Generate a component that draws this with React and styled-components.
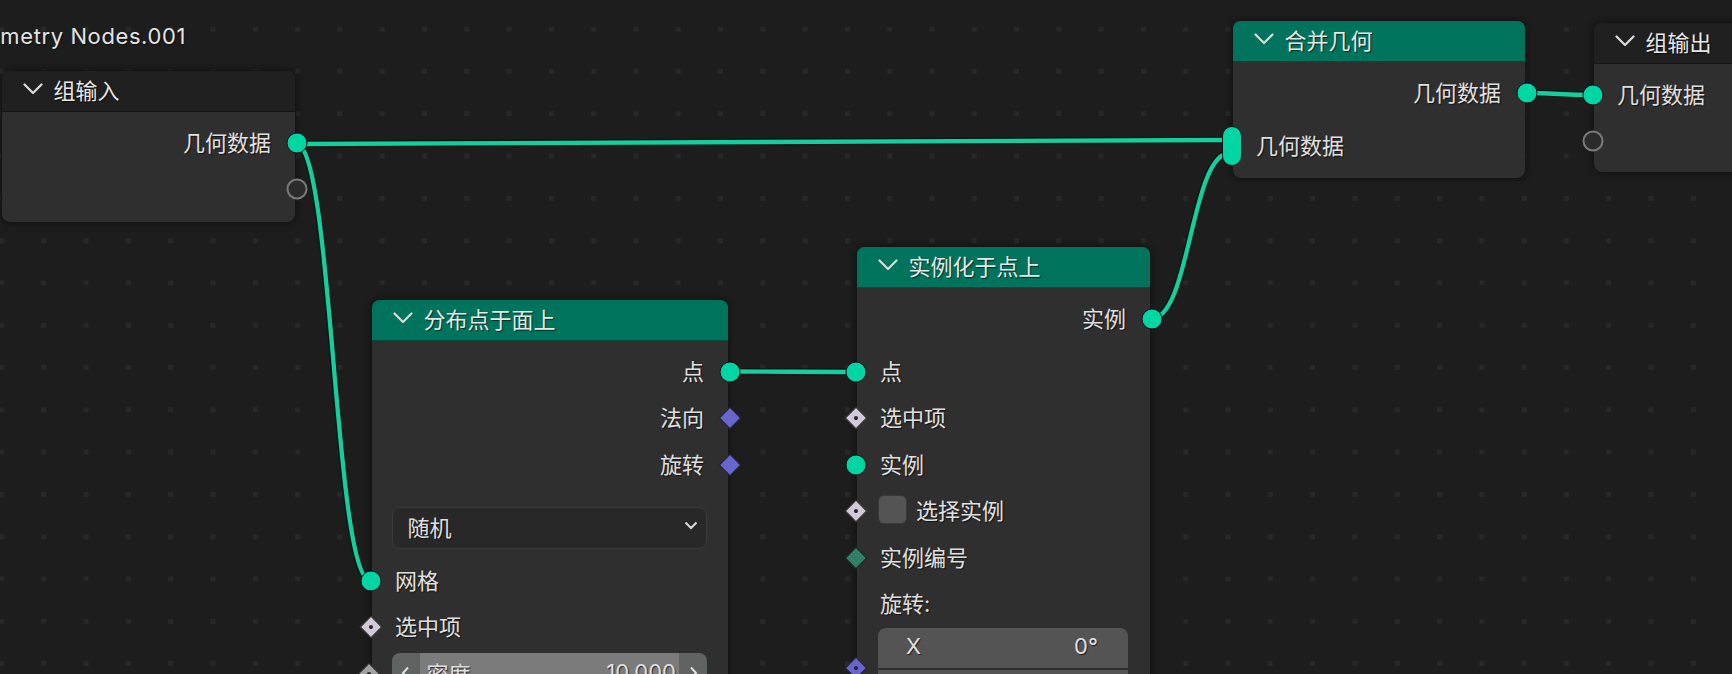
import React from 'react';
import styled, { createGlobalStyle, css } from 'styled-components';

const GlobalStyle = createGlobalStyle`
  html, body { margin: 0; padding: 0; background: #1d1d1d; overflow: hidden; }
  body { font-family: Inter, "Noto Sans CJK SC", "Noto Sans", sans-serif; }
  * { box-sizing: border-box; }
`;

const Canvas = styled.div`
  position: relative;
  width: 1732px;
  height: 674px;
  overflow: hidden;
  background-color: #1d1d1d;
  background-image: conic-gradient(from 270deg at 5px 5px, #282828 25%, transparent 0);
  background-size: 42.3px 42.3px;
  background-position: -1px 26.7px;
`;

const TreeTitle = styled.div`
  position: absolute;
  top: 21px;
  right: calc(100% - 186px);
  font-size: 22px;
  line-height: 30px;
  letter-spacing: 0.6px;
  white-space: nowrap;
  color: #e4e4e4;
  text-shadow: 1px 1px 1px rgba(0, 0, 0, 0.6);
`;

const Links = styled.svg`
  position: absolute;
  inset: 0;
  width: 1732px;
  height: 674px;
`;

const NodeBox = styled.div`
  position: absolute;
  left: ${(p) => p.$x}px;
  top: ${(p) => p.$y}px;
  width: ${(p) => p.$w}px;
  background: #2f2f2f;
  border: 1.5px solid #151515;
  border-radius: 9px;
  box-shadow: 0 0 7px rgba(0, 0, 0, 0.45);
  color: #e0e0e0;
  font-size: 22px;
  padding-bottom: ${(p) => p.$pb || 7}px;
`;

const Header = styled.div`
  height: 40.5px;
  display: flex;
  align-items: center;
  gap: 11px;
  padding-left: 20.5px;
  padding-bottom: 3px;
  background: ${(p) => (p.$teal ? '#00735c' : '#202020')};
  border-radius: 7.5px 7.5px 0 0;
  border-bottom: 1px solid rgba(0, 0, 0, 0.35);
  color: #e8e8e8;
  text-shadow: 1px 1px 1px rgba(0, 0, 0, 0.6);
  white-space: nowrap;
`;

const Chevron = styled.svg`
  width: 20px;
  height: 12px;
  flex: none;
`;

const Body = styled.div`
  display: flex;
  flex-direction: column;
  padding-top: 8px;
`;

const Row = styled.div`
  position: relative;
  height: 46.5px;
  display: flex;
  align-items: center;
  justify-content: ${(p) => (p.$out ? 'flex-end' : 'flex-start')};
  padding: ${(p) => (p.$out ? '0 24px 4px 0' : '0 0 4px 23px')};
`;

const Label = styled.span`
  white-space: nowrap;
  text-shadow: 1px 1px 1px rgba(0, 0, 0, 0.65);
`;

const Spacer = styled.div`
  height: 6.5px;
`;

const socketPlace = css`
  position: absolute;
  top: 50%;
  ${(p) => (p.$side === 'right' ? 'right: -1.5px;' : 'left: -1.5px;')}
`;

const Circle = styled.span`
  ${socketPlace}
  width: 21px;
  height: 21px;
  border-radius: 50%;
  background: #00d6a3;
  border: 1.5px solid #151515;
  transform: translate(${(p) => (p.$side === 'right' ? '50%' : '-50%')}, -50%);
  z-index: 2;
`;

const Hollow = styled(Circle)`
  background: #2b2b2b;
  border: 2px solid #7a7a7a;
`;

const Pill = styled.span`
  ${socketPlace}
  width: 20px;
  height: 40px;
  border-radius: 10px;
  background: #00d6a3;
  border: 1.5px solid #151515;
  transform: translate(-50%, -50%);
  z-index: 2;
`;

const diamondColors = {
  vector: '#6666cc',
  bool: '#d2c9d9',
  float: '#a1a1a1',
  int: '#2f7a63',
};

const Diamond = styled.span`
  ${socketPlace}
  top: ${(p) => p.$top || '50%'};
  width: 16px;
  height: 16px;
  background: ${(p) => diamondColors[p.$kind]};
  ${(p) =>
    p.$kind === 'int' &&
    css`
      background-image: radial-gradient(#4d9e86 35%, transparent 40%);
      background-size: 3px 3px;
    `}
  border: 1px solid #161616;
  transform: translate(${(p) => (p.$side === 'right' ? '50%' : '-50%')}, -50%) rotate(45deg);
  z-index: 2;
  display: flex;
  align-items: center;
  justify-content: center;
  &::after {
    content: '';
    display: ${(p) => (p.$dot ? 'block' : 'none')};
    width: 4px;
    height: 4px;
    border-radius: 50%;
    background: #262626;
  }
`;

const Select = styled.div`
  margin: 18.5px 21px 8.75px 19.5px;
  height: 42px;
  display: flex;
  align-items: center;
  justify-content: space-between;
  padding: 0 8px 4px 15px;
  background: #282828;
  border: 1.5px solid #3b3b3b;
  border-radius: 8px;
`;

const SmallChevron = styled.svg`
  width: ${(p) => p.$w || 14}px;
  height: ${(p) => p.$h || 9}px;
`;

const Slider = styled.div`
  position: relative;
  margin: 2.75px 21px 0 19.5px;
  height: 42px;
  display: flex;
  border-radius: 8px;
`;

const SliderCap = styled.div`
  width: 28px;
  flex: none;
  display: flex;
  align-items: center;
  justify-content: center;
  padding-bottom: 3px;
  background: #5f6361;
  border-radius: ${(p) => (p.$right ? '0 8px 8px 0' : '8px 0 0 8px')};
`;

const SliderMid = styled.div`
  flex: 1;
  display: flex;
  align-items: center;
  justify-content: space-between;
  padding: 0 3px 4px 7px;
  background: #7b7b7b;
`;

const SocketAnchor = styled.div`
  position: absolute;
  top: 0;
  bottom: 0;
  left: -21px;
  width: 0;
`;

const CheckBox = styled.span`
  width: 29px;
  height: 29px;
  margin-left: -2px;
  margin-right: 9px;
  border-radius: 6px;
  background: #545454;
  border: 1px solid #3a3a3a;
  flex: none;
`;

const VectorBlock = styled.div`
  position: relative;
  margin: 0 22px 0 21px;
  display: flex;
  flex-direction: column;
  gap: 2px;
`;

const VectorField = styled.div`
  height: 40px;
  display: flex;
  align-items: center;
  justify-content: space-between;
  padding: 0 30px 4px 28px;
  background: #545454;
  border-radius: ${(p) => (p.$first ? '8px 8px 0 0' : p.$last ? '0 0 8px 8px' : '0')};
`;

const HeaderChevron = () => (
  <Chevron viewBox="0 0 20 12">
    <polyline points="1.5,1.5 10,10 18.5,1.5" fill="none" stroke="#dcdcdc" strokeWidth="2.2" strokeLinecap="round" strokeLinejoin="round" />
  </Chevron>
);

const Node = ({ x, y, w, pb, title, teal, children }) => (
  <NodeBox $x={x} $y={y} $w={w} $pb={pb}>
    <Header $teal={teal}>
      <HeaderChevron />
      <span>{title}</span>
    </Header>
    <Body>{children}</Body>
  </NodeBox>
);

const bez = (x1, y1, x2, y2) => {
  const h = 0.5 * Math.abs(x2 - x1);
  return `M${x1} ${y1} C${x1 + h} ${y1} ${x2 - h} ${y2} ${x2} ${y2}`;
};

const linkData = [
  [296, 144, 1230, 140],
  [296, 144, 371, 581],
  [729, 371.5, 856, 372],
  [1151, 319, 1230, 153],
  [1526, 93, 1592, 95],
];

const ArrowL = () => (
  <SmallChevron viewBox="0 0 9 14" $w={9} $h={14}>
    <polyline points="7,1.5 2,7 7,12.5" fill="none" stroke="#e0e0e0" strokeWidth="2" />
  </SmallChevron>
);
const ArrowR = () => (
  <SmallChevron viewBox="0 0 9 14" $w={9} $h={14}>
    <polyline points="2,1.5 7,7 2,12.5" fill="none" stroke="#e0e0e0" strokeWidth="2" />
  </SmallChevron>
);

export default function App() {
  return (
    <Canvas>
      <GlobalStyle />
      <TreeTitle>Geometry Nodes.001</TreeTitle>
      <Links viewBox="0 0 1732 674">
        {linkData.map((l, i) => (
          <g key={i}>
            <path d={bez(...l)} fill="none" stroke="rgba(10,20,16,0.75)" strokeWidth="7" />
            <path d={bez(...l)} fill="none" stroke="#14cf9d" strokeWidth="4.3" />
          </g>
        ))}
      </Links>

      <Node x={1} y={70} w={295} pb={9} title="组输入">
        <Row $out>
          <Label>几何数据</Label>
          <Circle $side="right" />
        </Row>
        <Row $out>
          <Hollow $side="right" />
        </Row>
      </Node>

      <Node x={1232} y={20} w={294} pb={9} title="合并几何" teal>
        <Row $out>
          <Label>几何数据</Label>
          <Circle $side="right" />
        </Row>
        <Spacer />
        <Row>
          <Pill $side="left" />
          <Label>几何数据</Label>
        </Row>
      </Node>

      <Node x={1593} y={22} w={300} title="组输出">
        <Row>
          <Circle $side="left" />
          <Label>几何数据</Label>
        </Row>
        <Row>
          <Hollow $side="left" />
        </Row>
      </Node>

      <Node x={371} y={299} w={358} title="分布点于面上" teal>
        <Row $out>
          <Label>点</Label>
          <Circle $side="right" />
        </Row>
        <Row $out>
          <Label>法向</Label>
          <Diamond $side="right" $kind="vector" />
        </Row>
        <Row $out>
          <Label>旋转</Label>
          <Diamond $side="right" $kind="vector" />
        </Row>
        <Select>
          <Label>随机</Label>
          <SmallChevron viewBox="0 0 14 9">
            <polyline points="1.5,1.5 7,7 12.5,1.5" fill="none" stroke="#dcdcdc" strokeWidth="2" />
          </SmallChevron>
        </Select>
        <Row>
          <Circle $side="left" />
          <Label>网格</Label>
        </Row>
        <Row>
          <Diamond $side="left" $kind="bool" $dot />
          <Label>选中项</Label>
        </Row>
        <Slider>
          <SocketAnchor>
            <Diamond $side="left" $kind="float" $dot />
          </SocketAnchor>
          <SliderCap>
            <ArrowL />
          </SliderCap>
          <SliderMid>
            <Label>密度</Label>
            <Label>10.000</Label>
          </SliderMid>
          <SliderCap $right>
            <ArrowR />
          </SliderCap>
        </Slider>
        <Row>
          <Diamond $side="left" $kind="int" $dot />
          <Label>种子</Label>
        </Row>
      </Node>

      <Node x={856} y={246} w={295} title="实例化于点上" teal>
        <Row $out>
          <Label>实例</Label>
          <Circle $side="right" />
        </Row>
        <Spacer />
        <Row>
          <Circle $side="left" />
          <Label>点</Label>
        </Row>
        <Row>
          <Diamond $side="left" $kind="bool" $dot />
          <Label>选中项</Label>
        </Row>
        <Row>
          <Circle $side="left" />
          <Label>实例</Label>
        </Row>
        <Row>
          <Diamond $side="left" $kind="bool" $dot />
          <CheckBox />
          <Label>选择实例</Label>
        </Row>
        <Row>
          <Diamond $side="left" $kind="int" />
          <Label>实例编号</Label>
        </Row>
        <Row>
          <Label>旋转:</Label>
        </Row>
        <VectorBlock>
          <SocketAnchor>
            <Diamond $side="left" $kind="vector" $dot $top="40px" />
          </SocketAnchor>
          <VectorField $first>
            <Label>X</Label>
            <Label>0°</Label>
          </VectorField>
          <VectorField>
            <Label>Y</Label>
            <Label>0°</Label>
          </VectorField>
          <VectorField $last>
            <Label>Z</Label>
            <Label>0°</Label>
          </VectorField>
        </VectorBlock>
      </Node>
    </Canvas>
  );
}
